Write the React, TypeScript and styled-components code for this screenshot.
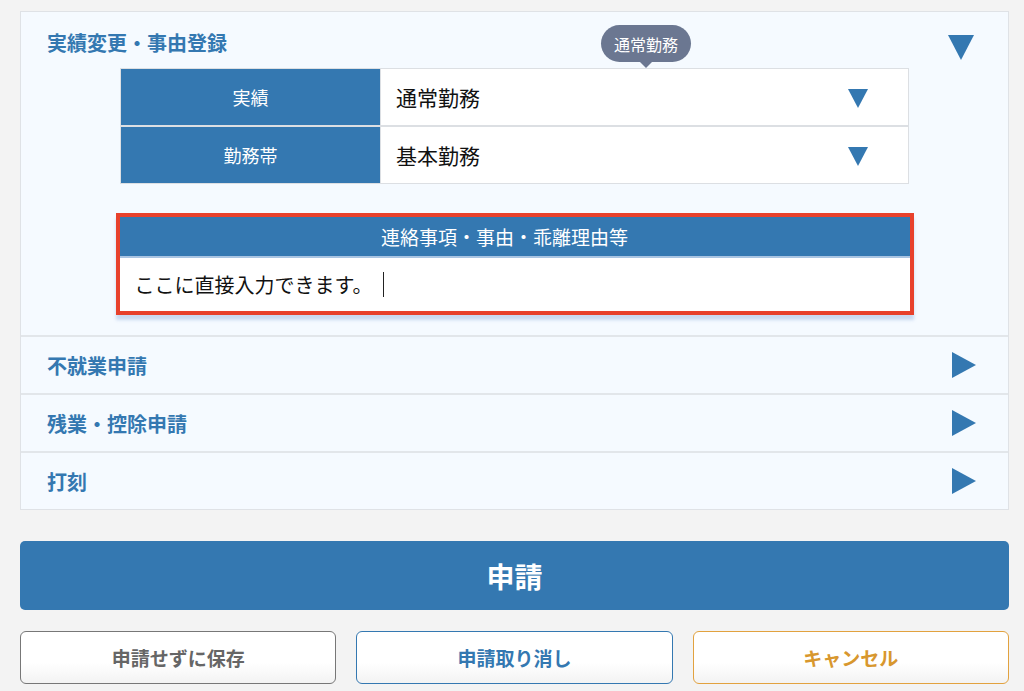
import React from 'react';
import styled, { createGlobalStyle } from 'styled-components';

const BLUE = '#3478b1';

const GlobalStyle = createGlobalStyle`
  html, body {
    margin: 0;
    padding: 0;
    background: #f3f3f3;
    font-family: "Noto Sans CJK JP", "Noto Sans", sans-serif;
  }
`;

const Page = styled.div`
  padding: 11px 15px 0 20px;
  display: flex;
  flex-direction: column;
`;

const Panel = styled.div`
  background: #f5faff;
  border: 1px solid #dfe2e6;
  display: flex;
  flex-direction: column;
`;

const Section = styled.div`
  position: relative;
  display: flex;
  flex-direction: column;
  align-items: center;
  padding-bottom: 20px;
`;

const SectionHead = styled.div`
  align-self: stretch;
  height: 56px;
  display: flex;
  align-items: center;
  justify-content: space-between;
  padding: 4px 34px 0 26px;
  box-sizing: border-box;
`;

const Title = styled.div`
  color: ${BLUE};
  font-size: 20px;
  font-weight: 700;
`;

const Triangle = styled.div<{ $dir: 'down' | 'right'; $w: number; $h: number; $shift?: number }>`
  width: 0;
  height: 0;
  margin-top: ${(p) => p.$shift ?? 0}px;
  ${(p) =>
    p.$dir === 'down'
      ? `border-left: ${p.$w / 2}px solid transparent;
         border-right: ${p.$w / 2}px solid transparent;
         border-top: ${p.$h}px solid ${BLUE};`
      : `border-top: ${p.$h / 2}px solid transparent;
         border-bottom: ${p.$h / 2}px solid transparent;
         border-left: ${p.$w}px solid ${BLUE};`}
`;

const Tooltip = styled.div`
  position: absolute;
  left: 580px;
  top: 13px;
  width: 90px;
  height: 37px;
  border-radius: 19px;
  background: #6b7791;
  color: #fff;
  font-size: 16px;
  display: flex;
  align-items: center;
  justify-content: center;
  &::after {
    content: '';
    position: absolute;
    left: 39px;
    bottom: -6px;
    border-left: 6px solid transparent;
    border-right: 6px solid transparent;
    border-top: 6px solid #6b7791;
  }
`;

const Table = styled.div`
  width: 787px;
  display: grid;
  grid-template-columns: 260px 1fr;
  border: 1px solid #dcdfe3;
  background: #dcdfe3;
  row-gap: 2px;
`;

const LabelCell = styled.div`
  height: 56px;
  background: ${BLUE};
  color: #fff;
  font-size: 18px;
  display: flex;
  align-items: center;
  justify-content: center;
  border-right: 1px solid #dcdfe3;
`;

const ValueCell = styled.div`
  height: 56px;
  background: #fff;
  color: #111;
  font-size: 21px;
  display: flex;
  align-items: center;
  justify-content: space-between;
  padding: 0 40px 0 15px;
`;

const NoteBox = styled.div`
  margin-top: 29px;
  width: 798px;
  box-sizing: border-box;
  border: 4px solid #e8412c;
  box-shadow: 0 5px 3px rgba(150, 180, 225, 0.45);
`;

const NoteHead = styled.div`
  height: 39px;
  background: ${BLUE};
  color: #fff;
  font-size: 19px;
  display: flex;
  align-items: center;
  justify-content: center;
  padding-right: 20px;
  border-bottom: 2px solid #a9c4e2;
`;

const NoteInput = styled.div`
  height: 53px;
  background: #fff;
  font-size: 20px;
  color: #111;
  display: flex;
  align-items: center;
  padding-left: 15px;
`;

const Caret = styled.span`
  display: inline-block;
  width: 1px;
  height: 25px;
  background: #222;
  margin-left: 10px;
`;

const Row = styled.div`
  height: 56px;
  border-top: 2px solid #e2e6ea;
  display: flex;
  align-items: center;
  justify-content: space-between;
  padding: 0 32px 0 26px;
`;

const Submit = styled.button`
  margin-top: 31px;
  height: 69px;
  border: none;
  border-radius: 5px;
  background: ${BLUE};
  color: #fff;
  font-family: inherit;
  font-size: 28px;
  font-weight: 700;
`;

const ButtonRow = styled.div`
  margin-top: 21px;
  display: grid;
  grid-template-columns: repeat(3, 1fr);
  column-gap: 20px;
`;

const SubButton = styled.button<{ $color: string; $text: string }>`
  height: 53px;
  border: 1px solid ${(p) => p.$color};
  border-radius: 6px;
  background: linear-gradient(#ffffff 60%, #f3f3f3);
  color: ${(p) => p.$text};
  font-family: inherit;
  font-size: 19px;
  font-weight: 700;
`;

const collapsed = ['不就業申請', '残業・控除申請', '打刻'];

export default function App() {
  return (
    <>
      <GlobalStyle />
      <Page>
        <Panel>
          <Section>
            <SectionHead>
              <Title>実績変更・事由登録</Title>
              <Triangle $dir="down" $w={27} $h={25} $shift={10} />
            </SectionHead>
            <Tooltip>通常勤務</Tooltip>
            <Table>
              <LabelCell>実績</LabelCell>
              <ValueCell>
                通常勤務
                <Triangle $dir="down" $w={21} $h={19} $shift={2} />
              </ValueCell>
              <LabelCell>勤務帯</LabelCell>
              <ValueCell>
                基本勤務
                <Triangle $dir="down" $w={21} $h={19} $shift={2} />
              </ValueCell>
            </Table>
            <NoteBox>
              <NoteHead>連絡事項・事由・乖離理由等</NoteHead>
              <NoteInput>
                ここに直接入力できます。
                <Caret />
              </NoteInput>
            </NoteBox>
          </Section>
          {collapsed.map((t) => (
            <Row key={t}>
              <Title>{t}</Title>
              <Triangle $dir="right" $w={24} $h={27} />
            </Row>
          ))}
        </Panel>
        <Submit>申請</Submit>
        <ButtonRow>
          <SubButton $color="#777" $text="#666">申請せずに保存</SubButton>
          <SubButton $color={BLUE} $text={BLUE}>申請取り消し</SubButton>
          <SubButton $color="#e2a23f" $text="#d8972e">キャンセル</SubButton>
        </ButtonRow>
      </Page>
    </>
  );
}
